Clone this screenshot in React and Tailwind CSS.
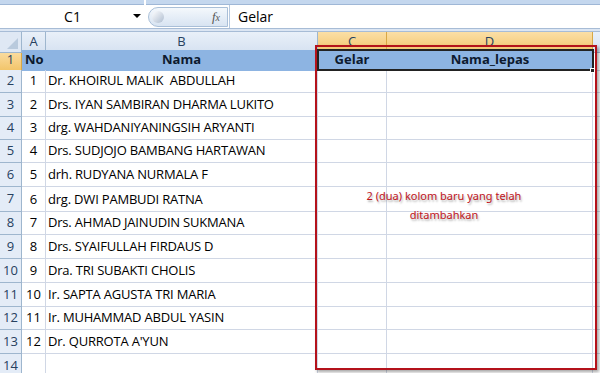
const rows = [
  { h: 23, no: "1", nama: "Dr. KHOIRUL MALIK  ABDULLAH" },
  { h: 24, no: "2", nama: "Drs. IYAN SAMBIRAN DHARMA LUKITO" },
  { h: 23, no: "3", nama: "drg. WAHDANIYANINGSIH ARYANTI" },
  { h: 23, no: "4", nama: "Drs. SUDJOJO BAMBANG HARTAWAN" },
  { h: 24, no: "5", nama: "drh. RUDYANA NURMALA F" },
  { h: 25, no: "6", nama: "drg. DWI PAMBUDI RATNA" },
  { h: 23, no: "7", nama: "Drs. AHMAD JAINUDIN SUKMANA" },
  { h: 24, no: "8", nama: "Drs. SYAIFULLAH FIRDAUS D" },
  { h: 24, no: "9", nama: "Dra. TRI SUBAKTI CHOLIS" },
  { h: 24, no: "10", nama: "Ir. SAPTA AGUSTA TRI MARIA" },
  { h: 23, no: "11", nama: "Ir. MUHAMMAD ABDUL YASIN" },
  { h: 24, no: "12", nama: "Dr. QURROTA A'YUN" },
  { h: 24, no: "", nama: "" },
];

const cols = "grid-cols-[22px_24px_272px_69px_206px_7px]";

const App = () => {
  return (
    <div className="relative w-[600px] h-[373px] overflow-hidden bg-white font-['Open_Sans',sans-serif]">
      {/* ribbon bottom edge */}
      <div className="flex h-[5px]">
        <div className="w-[144px] bg-[#c4d7ee] border-b border-[#9fb7d6]" />
        <div className="w-[2px] bg-white" />
        <div className="flex-1 bg-[#c4d7ee] border-b border-[#9fb7d6]" />
      </div>

      {/* formula bar */}
      <div className="flex h-[23px] items-center bg-white">
        <div className="relative w-[145px] h-full flex items-center justify-center text-[14px] text-black">
          C1
          <span className="absolute right-[4px] top-[9px] w-0 h-0 border-l-[4px] border-r-[4px] border-t-[4px] border-l-transparent border-r-transparent border-t-black" />
        </div>
        <div className="relative ml-[3px] w-[80px] h-[20px] rounded-l-full bg-gradient-to-b from-[#f4f8fc] to-[#d8e4f2] border border-[#a9bfd8] flex items-center justify-end pr-[7px]">
          <span className="absolute left-[3px] top-[3px] w-[12px] h-[12px] rounded-full bg-gradient-to-br from-[#ffffff] to-[#aebdd0]" />
          <span className="font-['Liberation_Serif',serif] italic text-[13px] text-[#555] leading-none">
            f<span className="text-[10px]">x</span>
          </span>
        </div>
        <div className="h-full border-l border-[#b6c9e0] ml-[1px] flex items-center pl-[8px] text-[14px] text-black">
          Gelar
        </div>
      </div>
      <div className="h-[4px] bg-[#dce6f3] border-y border-[#a7bcd6]" />

      {/* column headers */}
      <div className={`grid ${cols} h-[18px]`}>
        <div className="bg-[#dfe8f4] border-r border-b border-[#9eb6ce] relative">
          <span className="absolute right-[3px] bottom-[3px] w-0 h-0 border-l-[11px] border-b-[11px] border-l-transparent border-b-[#b9cadd]" />
        </div>
        {["A", "B"].map((c) => (
          <div key={c} className="flex items-center justify-center bg-gradient-to-b from-[#e9f0f9] to-[#d6e2f1] border-r border-b border-[#9eb6ce] text-[13px] text-[#27415f]">
            {c}
          </div>
        ))}
        {["C", "D"].map((c) => (
          <div key={c} className="flex items-center justify-center bg-gradient-to-b from-[#fbdfa6] to-[#f2c56a] border-r border-b border-[#d8a846] text-[13px] text-[#27415f]">
            {c}
          </div>
        ))}
        <div className="bg-gradient-to-b from-[#e9f0f9] to-[#d6e2f1] border-b border-[#9eb6ce]" />
      </div>

      {/* row 1 */}
      <div className={`grid ${cols} h-[20px] text-[13px] font-bold text-[#0d1a2e]`}>
        <div className="flex items-center justify-center bg-gradient-to-b from-[#fbdfa6] to-[#f2c56a] border-r border-b border-[#d8a846] font-normal text-[13px] text-[#27415f]">
          1
        </div>
        <div className="flex items-center pl-[3px] bg-[#8db4e2] border-r border-b border-[#8db4e2]">No</div>
        <div className="flex items-center justify-center bg-[#8db4e2] border-r border-b border-[#8db4e2]">Nama</div>
        <div className="flex items-center justify-center bg-[#8db4e2] border-r border-b border-[#8db4e2]">Gelar</div>
        <div className="flex items-center justify-center bg-[#8db4e2] border-b border-[#8db4e2]">Nama_lepas</div>
        <div className="border-b border-[#d0d7e5]" />
      </div>

      {/* data rows */}
      {rows.map((r, i) => (
        <div key={i} className={`grid ${cols} text-[13px] text-black`} style={{ height: r.h }}>
          <div className="flex items-center justify-center bg-[#e4ecf7] border-r border-b border-[#9eb6ce] text-[13px] text-[#27415f]">
            {i + 2}
          </div>
          <div className="flex items-end justify-center pb-[2px] border-r border-b border-[#d0d7e5]">{r.no}</div>
          <div className="flex items-end pl-[2px] pb-[2px] border-r border-b border-[#d0d7e5] whitespace-pre tracking-[-0.2px]">{r.nama}</div>
          <div className="border-r border-b border-[#d0d7e5]" />
          <div className="border-r border-b border-[#d0d7e5]" />
          <div className="border-b border-[#d0d7e5]" />
        </div>
      ))}

      {/* selection C1:D1 */}
      <div className="absolute left-[317px] top-[49px] w-[277px] h-[22px] border-2 border-[#222]" />
      <div className="absolute left-[590px] top-[68px] w-[5px] h-[5px] bg-[#222] border border-white" />

      {/* annotation box */}
      <div className="absolute left-[315px] top-[45px] w-[282px] h-[325px] border-2 border-[#b4121b] shadow-[2px_2px_3px_rgba(0,0,0,0.35)]" />
      <div className="absolute left-[360px] top-[186px] w-[168px] text-center text-[11px] leading-[19px] text-[#c0141c] font-['Noto_Sans',sans-serif] [text-shadow:1px_2px_2px_rgba(0,0,0,0.3)]">
        2 (dua) kolom baru yang telah
        <br />
        ditambahkan
      </div>
    </div>
  );
};

export default App;
